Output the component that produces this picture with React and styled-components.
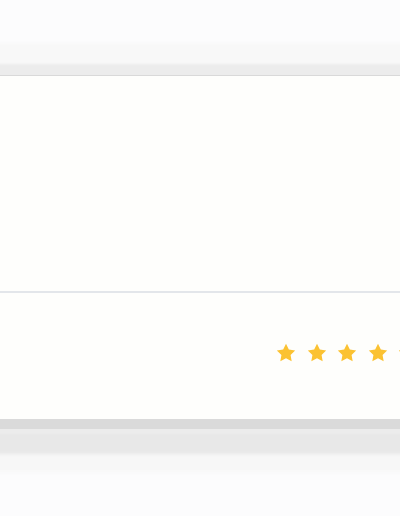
import React from 'react'
import styled, { createGlobalStyle } from 'styled-components'

const GlobalStyle = createGlobalStyle`
  html, body {
    margin: 0;
    padding: 0;
    background: #fcfcfd;
    overflow: hidden;
    font-family: 'Liberation Sans', Arial, sans-serif;
  }
`

const Page = styled.div`
  width: 400px;
  height: 516px;
  padding-top: 75px;
  box-sizing: border-box;
  overflow: hidden;
`

const Card = styled.div`
  width: 440px;
  background: #fefefc;
  border-top: 1px solid #d9d9d9;
  box-shadow:
    0 10px 0 0 #dadada,
    0 2px 2px 13px #ececec,
    0 21px 3px 14px #e8e8e8,
    0 0 4px 32px #f8f8f8,
    0 20px 4px 33px #f7f7f7;
`

const Body = styled.div`
  height: 215px;
`

const Divider = styled.hr`
  margin: 0;
  border: 0;
  height: 1.5px;
  background: #e3e6ea;
`

const Footer = styled.div`
  height: 126px;
  box-sizing: border-box;
  padding: 49px 21px 0 0;
  display: flex;
  justify-content: flex-end;
  gap: 8.5px;
`

const Star = styled.svg`
  width: 22px;
  height: 22px;
  fill: #fbc232;
  flex-shrink: 0;
`

const StarIcon = () => (
  <Star viewBox="0 0 24 24">
    <path d="M12 2l3.09 6.26L22 9.27l-5 4.87 1.18 6.88L12 17.77l-6.18 3.25L7 14.14 2 9.27l6.91-1.01L12 2z" />
  </Star>
)

const App = () => {
  const stars = [1, 2, 3, 4, 5]
  return (
    <>
      <GlobalStyle />
      <Page>
        <Card>
          <Body />
          <Divider />
          <Footer>
            {stars.map(id => (
              <StarIcon key={id} />
            ))}
          </Footer>
        </Card>
      </Page>
    </>
  )
}

export default App
